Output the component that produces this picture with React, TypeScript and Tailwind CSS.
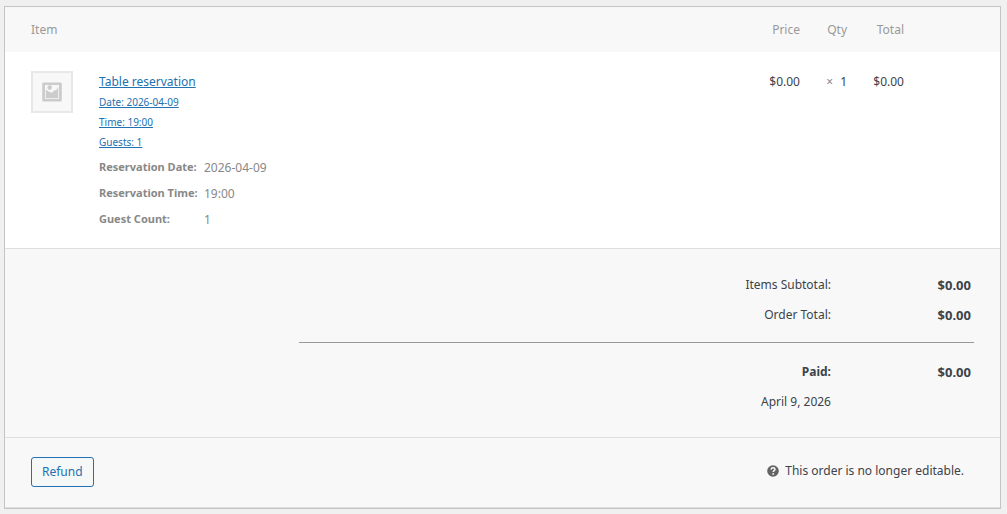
import type { ReactNode } from 'react';

const summaryLines = ['Date: 2026-04-09', 'Time: 19:00', 'Guests: 1'];

const itemMeta = [
  { label: 'Reservation Date:', value: '2026-04-09' },
  { label: 'Reservation Time:', value: '19:00' },
  { label: 'Guest Count:', value: '1' },
];

function PlaceholderImage() {
  return (
    <div className="flex h-[42px] w-[42px] items-center justify-center border-2 border-[#e8e8e8] bg-[#f8f8f8]">
      <svg viewBox="0 0 20 20" className="h-5 w-5" fill="#cccccc" aria-hidden="true">
        <path
          fillRule="evenodd"
          d="M1.500 0.500h17a1.300 1.300 0 0 1 1.300 1.300v16.400a1.300 1.300 0 0 1-1.300 1.300H1.500a1.300 1.300 0 0 1-1.300-1.300V1.800A1.300 1.300 0 0 1 1.500 0.500zM3 3v14h14V3z"
        />
        <circle cx="7.700" cy="5.600" r="2.300" />
        <path d="M3.800 7.500L6.500 9.500L10 10.800L12.500 8L14 8.500L16.200 5V16.200H3.800z" />
      </svg>
    </div>
  );
}

function HelpIcon() {
  return (
    <svg viewBox="0 0 12 12" className="h-3 w-3 shrink-0" aria-hidden="true">
      <circle cx="6" cy="6" r="5.800" fill="#646464" />
      <path
        d="M4.100 4.600C4.200 3.300 5 2.800 6 2.800C7.100 2.800 7.900 3.400 7.900 4.400C7.900 5.600 6.200 5.600 6.200 7"
        fill="none"
        stroke="#f8f8f8"
        strokeWidth="1.500"
      />
      <circle cx="6.200" cy="8.900" r="0.900" fill="#f8f8f8" />
    </svg>
  );
}

function TotalRow({ label, children, bold }: { label: string; children?: ReactNode; bold?: boolean }) {
  return (
    <tr className="h-[30px]">
      <th scope="row" className={bold ? 'text-right font-bold' : 'text-right font-normal'}>
        {label}
      </th>
      <td className="w-[140px] text-right text-[13px] font-bold">{children}</td>
    </tr>
  );
}

export default function App() {
  return (
    <div className="min-h-screen bg-[#f0f0f1] pt-1.5 pr-1.5 pl-1 font-['Noto_Sans','Open_Sans',sans-serif] text-[12px] leading-5 text-[#3c434a]">
      <div className="border border-[#c3c4c7] bg-[#f8f8f8]">
        {/* Order items */}
        <table className="w-full bg-white">
          <thead>
            <tr className="h-[45px] bg-[#f8f8f8] text-[#999999]">
              <th colSpan={2} className="pl-[26px] text-left font-normal">Item</th>
              <th className="w-20 text-right font-normal">Price</th>
              <th className="w-[47px] text-right font-normal">Qty</th>
              <th className="w-[153px] pr-24 text-right font-normal">Total</th>
            </tr>
          </thead>
          <tbody>
            <tr className="align-top">
              <td className="w-[94px] pt-[19px] pl-[26px]">
                <PlaceholderImage />
              </td>
              <td className="pt-5 pb-[13px]">
                <a href="#" className="inline-block text-[#2271b1] underline">
                  Table reservation
                  {summaryLines.map((line) => (
                    <span key={line} className="block text-[10px] leading-5">{line}</span>
                  ))}
                </a>
                <table className="mt-[5px] text-[#888888]">
                  <tbody>
                    {itemMeta.map((meta) => (
                      <tr key={meta.label} className="h-[26px]">
                        <th scope="row" className="w-[105px] text-left align-top text-[11px] font-bold whitespace-nowrap">
                          {meta.label}
                        </th>
                        <td className="pt-px align-top">{meta.value}</td>
                      </tr>
                    ))}
                  </tbody>
                </table>
              </td>
              <td className="pt-5 text-right">$0.00</td>
              <td className="pt-5 text-right whitespace-nowrap">
                <small className="mr-[7px] text-[12px] text-[#888888]">×</small>1
              </td>
              <td className="pt-5 pr-24 text-right">$0.00</td>
            </tr>
          </tbody>
        </table>

        {/* Totals */}
        <div className="border-t border-[#dfdfdf] px-[26px] pt-[21px] pb-5">
          <div className="pr-[3px]">
            <table className="w-full">
              <tbody>
                <TotalRow label="Items Subtotal:">$0.00</TotalRow>
                <TotalRow label="Order Total:">$0.00</TotalRow>
              </tbody>
            </table>
          </div>
          <hr className="mt-3 mb-3.5 ml-[268px] border-t border-[#999999]" />
          <div className="pr-[3px]">
            <table className="w-full">
              <tbody>
                <TotalRow label="Paid:" bold>$0.00</TotalRow>
                <TotalRow label="April 9, 2026" />
              </tbody>
            </table>
          </div>
        </div>

        {/* Actions */}
        <div className="flex items-start justify-between border-y border-[#dfdfdf] pt-[19px] pb-5 pr-9 pl-[26px]">
          <button
            type="button"
            className="h-[30px] rounded-[3px] border border-[#2271b1] bg-[#f6f7f7] px-2.5 text-[#2271b1]"
          >
            Refund
          </button>
          <p className="mt-1 flex items-center gap-1.5">
            <HelpIcon />
            This order is no longer editable.
          </p>
        </div>
      </div>
    </div>
  );
}
